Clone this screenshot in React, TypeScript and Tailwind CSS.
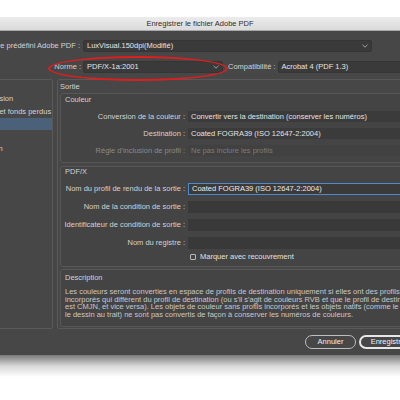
import React from 'react';

const Chevron = () => (
    <svg width="6" height="4" viewBox="0 0 6 4" className="shrink-0">
        <polyline points="0.5,0.8 3,3.2 5.5,0.8" fill="none" stroke="#a8a8a8" strokeWidth="0.9" />
    </svg>
);

function Row({ label, dim, children }: { label: string; dim?: boolean; children: React.ReactNode }) {
    return (
        <div className="flex items-center h-[11px]">
            <div className={`w-[124px] shrink-0 text-right whitespace-nowrap ${dim ? 'text-[#8a8a8a]' : 'text-[#d2d2d2]'}`}>
                {label}
            </div>
            <div className="ml-[3px] flex-1 h-full">{children}</div>
        </div>
    );
}

export default function App() {
    const menu = ['Général', 'Compression', 'Repères et fonds perdus', 'Sortie', 'Avancé', 'Protection'];

    return (
        <div
            className="relative w-[400px] h-[400px] overflow-hidden bg-white text-[7.5px] leading-none"
            style={{ fontFamily: '"Liberation Sans", Arial, sans-serif' }}
        >
            <div className="h-[17px]" />
            <div className="ml-[-45px] w-[490px]">
                {/* Title bar */}
                <div className="h-[14px] bg-gradient-to-b from-[#ececec] to-[#dadada] border-b border-[#a9a9a9] flex items-center justify-center text-[#2e2e2e]">
                    Enregistrer le fichier Adobe PDF
                </div>

                {/* Dialog body */}
                <div className="h-[324px] bg-[#474747] pt-[9px] text-[#d2d2d2]">
                    <div className="flex items-center h-[12px]">
                        <div className="w-[128px] pr-[3px] text-right whitespace-nowrap">Paramètre prédéfini Adobe PDF :</div>
                        <div className="w-[289px] h-full bg-[#3a3a3a] border border-[#353535] rounded-[2px] flex items-center justify-between pl-[3px] pr-[3px] text-[#e4e4e4]">
                            LuxVisual.150dpi(Modifié)
                            <Chevron />
                        </div>
                    </div>

                    <div className="flex items-center h-[12px] mt-[9px]">
                        <div className="w-[128px] pr-[2px] text-right whitespace-nowrap">Norme :</div>
                        <div className="w-[140px] h-full bg-[#3a3a3a] border border-[#353535] rounded-[2px] flex items-center justify-between pl-[3px] pr-[3px] text-[#e4e4e4]">
                            PDF/X-1a:2001
                            <Chevron />
                        </div>
                        <div className="ml-[5px] mr-[2px] whitespace-nowrap">Compatibilité :</div>
                        <div className="flex-1 mr-[10px] h-full bg-[#3a3a3a] border border-[#353535] rounded-[2px] flex items-center pl-[3px] text-[#e4e4e4]">
                            Acrobat 4 (PDF 1.3)
                        </div>
                    </div>

                    {/* Panels */}
                    <div className="flex h-[250px] mt-[6px]">
                        <div className="ml-[10px] w-[88px] border border-[#595959] rounded-[2px] overflow-hidden">
                            {menu.map((m) => (
                                <div
                                    key={m}
                                    className={`h-[12.5px] pl-[3px] flex items-center whitespace-nowrap ${m === 'Sortie' ? 'bg-[#4b6079] text-white' : ''}`}
                                >
                                    {m}
                                </div>
                            ))}
                        </div>

                        <div className="ml-[4px] mr-[10px] flex-1 border border-[#595959] rounded-[2px] flex flex-col">
                            <div className="h-[13px] pl-[2px] flex items-center">Sortie</div>

                            {/* Couleur */}
                            <div className="mx-[2px] h-[70px] border border-[#575757] rounded-[3px] bg-[#444444]">
                                <div className="h-[10px] mt-[1px] pl-[4px] flex items-center">Couleur</div>
                                <div className="mt-[6px] flex flex-col gap-[6px]">
                                    <Row label="Conversion de la couleur :">
                                        <div className="h-full bg-[#3b3b3b] flex items-center pl-[3px] text-[#e2e2e2] whitespace-nowrap">
                                            Convertir vers la destination (conserver les numéros)
                                        </div>
                                    </Row>
                                    <Row label="Destination :">
                                        <div className="h-full bg-[#3b3b3b] flex items-center pl-[3px] text-[#e2e2e2] whitespace-nowrap">
                                            Coated FOGRA39 (ISO 12647-2:2004)
                                        </div>
                                    </Row>
                                    <Row label="Règle d'inclusion de profil :" dim>
                                        <div className="h-full bg-[#414141] flex items-center pl-[3px] text-[#7c7c7c] whitespace-nowrap">
                                            Ne pas inclure les profils
                                        </div>
                                    </Row>
                                </div>
                            </div>

                            {/* PDF/X */}
                            <div className="mx-[2px] mt-[3px] h-[101px] border border-[#575757] rounded-[3px] bg-[#444444]">
                                <div className="h-[10px] pl-[4px] flex items-center">PDF/X</div>
                                <div className="mt-[6px] flex flex-col gap-[6px]">
                                    <div className="flex items-center h-[12px]">
                                        <div className="w-[124px] text-right whitespace-nowrap">Nom du profil de rendu de la sortie :</div>
                                        <div className="ml-[3px] flex-1 h-full bg-[#3a3a3a] border border-[#4f8bcc] flex items-center pl-[3px] text-[#ececec] whitespace-nowrap">
                                            Coated FOGRA39 (ISO 12647-2:2004)
                                        </div>
                                    </div>
                                    {['Nom de la condition de sortie :', 'Identificateur de condition de sortie :', 'Nom du registre :'].map((l) => (
                                        <div key={l} className="flex items-center h-[12px]">
                                            <div className="w-[124px] text-right whitespace-nowrap">{l}</div>
                                            <div className="ml-[3px] flex-1 h-full bg-[#393939]" />
                                        </div>
                                    ))}
                                </div>
                                <div className="flex items-center h-[10px] mt-[3px] pl-[129px]">
                                    <div className="w-[6px] h-[6px] border border-[#b8b8b8] rounded-[1px]" />
                                    <span className="ml-[4px] text-[#e0e0e0]">Marquer avec recouvrement</span>
                                </div>
                            </div>

                            {/* Description */}
                            <div className="mx-[2px] mt-[2px] mb-[1px] flex-1 border border-[#575757] rounded-[3px] bg-[#444444]">
                                <div className="h-[10px] mt-[3px] pl-[4px] flex items-center">Description</div>
                                <div className="mt-[5px] pl-[4px] leading-[7.5px] text-[#c8c8c8] whitespace-nowrap">
                                    Les couleurs seront converties en espace de profils de destination uniquement si elles ont des profils
                                    <br />
                                    incorporés qui diffèrent du profil de destination (ou s'il s'agit de couleurs RVB et que le profil de destination
                                    <br />
                                    est CMJN, et vice versa). Les objets de couleur sans profils incorporés et les objets natifs (comme le texte et
                                    <br />
                                    le dessin au trait) ne sont pas convertis de façon à conserver les numéros de couleurs.
                                </div>
                            </div>
                        </div>
                    </div>

                    {/* Buttons */}
                    <div className="flex gap-[3px] pl-[350px] mt-[6px]">
                        <div className="w-[51px] h-[14px] rounded-full border border-[#bdbdbd] flex items-center justify-center text-[#ededed]">
                            Annuler
                        </div>
                        <div className="w-[60px] h-[14px] rounded-full border-2 border-[#e6e6e6] flex items-center justify-center text-[#f2f2f2]">
                            Enregistrer
                        </div>
                    </div>
                </div>

                {/* Drop shadow */}
                <div className="h-[22px] bg-gradient-to-b from-[#7a7a7a] via-[#d8d8d8] to-white" />
            </div>

            {/* Red annotation ellipse */}
            <div className="absolute left-[48px] top-[56px] w-[180px] h-[25px] rounded-[50%] border-2 border-[#e01e1e]" />
        </div>
    );
}
